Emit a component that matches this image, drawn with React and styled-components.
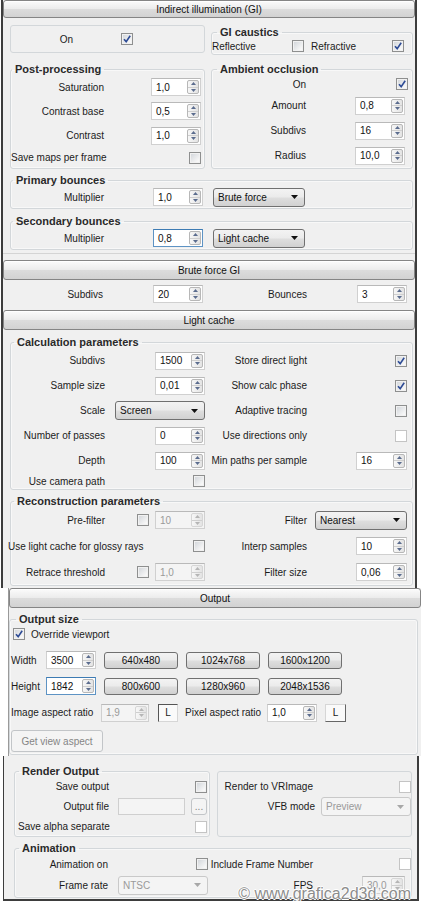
import styled, { createGlobalStyle } from 'styled-components';

const Global = createGlobalStyle`
  html, body { margin: 0; padding: 0; background: #fff; }
  body {
    font-family: "Liberation Sans", Arial, sans-serif;
    font-size: 10px;
    color: #1b1b1b;
  }
  * { box-sizing: border-box; }
`;

const TopPanel = styled.div`
  margin-left: 1px;
  width: 416px;
  height: 588px;
  background: #f0f0f0;
  border-left: 2px solid #3d3d3d;
  border-right: 2px solid #3d3d3d;
  overflow: hidden;
`;

const OutputTop = styled.div`
  margin-left: 8px;
  width: 413px;
  height: 168px;
  background: #f0f0f0;
  border-left: 1px solid #9a9a9a;
`;

const OutputBottom = styled.div`
  position: relative;
  margin-left: 3px;
  width: 416px;
  background: #f0f0f0;
  border-left: 1px solid #3d3d3d;
  border-right: 2px solid #3d3d3d;
  border-bottom: 2px solid #3d3d3d;
  padding: 9px 5px 1px 10px;
`;

const RollHeader = styled.div`
  height: ${p => p.$h || 20}px;
  margin-top: ${p => p.$mt || 0}px;
  border: 1px solid #858585;
  border-radius: 3px;
  background: linear-gradient(#fbfbfb, #ececec 48%, #dcdcdc 52%, #d2d2d2);
  box-shadow: inset 0 1px 0 #fff;
  display: flex;
  align-items: center;
  justify-content: center;
  font-size: 10px;
  color: #111;
`;

const Body = styled.div`
  padding: ${p => p.$pad};
  border-bottom: ${p => (p.$line ? '1px solid #d4d4d4' : 'none')};
`;

const Pair = styled.div`
  display: grid;
  grid-template-columns: ${p => p.$cols};
  column-gap: ${p => p.$gap}px;
  margin-top: ${p => p.$mt || 0}px;
  align-items: ${p => p.$align || 'stretch'};
`;

const Group = styled.fieldset`
  margin: ${p => p.$mt || 0}px ${p => p.$mr || 0}px 0 0;
  padding: ${p => p.$pad || '0'};
  min-width: 0;
  height: ${p => (p.$h ? `${p.$h}px` : 'auto')};
  border: 1px solid #d3d7da;
  border-radius: 3px;
  box-shadow: inset 0 0 0 1px #f8f8f8;
`;

const Legend = styled.legend`
  margin-left: ${p => p.$ml}px;
  padding: 0 3px;
  font-size: 11px;
  line-height: 12px;
  font-weight: bold;
  color: #2a2a2a;
`;

const PlainBox = styled.div`
  height: ${p => p.$h}px;
  margin-top: ${p => p.$mt || 0}px;
  border: 1px solid #d3d7da;
  border-radius: 3px;
  padding: ${p => p.$pad || '0'};
`;

const Row = styled.div`
  display: grid;
  grid-template-columns: ${p => p.$cols};
  align-items: center;
  height: ${p => p.$h}px;
  padding-right: ${p => p.$pr || 0}px;
`;

const Line = styled.div`
  display: flex;
  align-items: center;
  height: ${p => p.$h}px;
  margin-top: ${p => p.$mt || 0}px;
  padding: ${p => p.$pad || '0'};
`;

const Label = styled.span`
  text-align: ${p => (p.$left ? 'left' : 'right')};
  white-space: nowrap;
  margin-left: ${p => p.$ml || 0}px;
  width: ${p => (p.$w ? `${p.$w}px` : 'auto')};
  flex: none;
`;

const Cell = styled.div`
  display: flex;
  justify-content: flex-end;
  align-items: center;
  gap: ${p => p.$gap || 0}px;
  margin-right: ${p => p.$mr || 0}px;
`;

const Spacer = styled.div`
  flex: 1;
`;

const CheckBox = styled.span`
  flex: none;
  width: 12px;
  height: 12px;
  margin-left: ${p => p.$ml || 0}px;
  display: inline-flex;
  align-items: center;
  justify-content: center;
  border: 1px solid ${p => (p.$flat ? '#c4c4c4' : '#8e8f8f')};
  background: ${p => (p.$flat ? '#fff' : 'linear-gradient(135deg, #cfd3d8, #f7f7f7 80%)')};
  box-shadow: inset 0 0 0 1px ${p => (p.$flat ? '#fff' : '#f1f1f1')};
`;

const Check = ({ on, flat, ml }) => (
  <CheckBox $flat={flat} $ml={ml}>
    {on && (
      <svg width="10" height="10" viewBox="0 0 10 10">
        <path d="M2 5.2 L4.2 7.6 L8.2 1.8" fill="none" stroke="#2d4b95" strokeWidth="1.6" />
      </svg>
    )}
  </CheckBox>
);

const SpinFrame = styled.div`
  flex: none;
  width: ${p => p.$w || 50}px;
  height: 18px;
  display: flex;
  background: ${p => (p.$disabled ? '#f4f4f4' : '#fff')};
  border: 1px solid ${p => (p.$focus ? '#5d93c4' : '#d0d0d0')};
  border-top-color: ${p => (p.$focus ? '#3d7bb3' : '#b9b9b9')};
  color: ${p => (p.$disabled ? '#9a9a9a' : '#111')};
`;

const SpinValue = styled.span`
  flex: 1;
  display: flex;
  align-items: center;
  padding-left: 4px;
`;

const SpinArrows = styled.div`
  width: 12px;
  margin: 1px;
  display: flex;
  flex-direction: column;
  border: 1px solid ${p => (p.$disabled ? '#d6d6d6' : '#b7b7b7')};
  border-radius: 2px;
  background: linear-gradient(90deg, #f7f7f7, #e3e3e3);
`;

const SpinHalf = styled.div`
  flex: 1;
  display: flex;
  align-items: center;
  justify-content: center;
  & + & { border-top: 1px solid #cfcfcf; }
`;

const Spin = ({ v, w, focus, disabled }) => {
  const c = disabled ? '#b5b5b5' : '#5b6c8e';
  return (
    <SpinFrame $w={w} $focus={focus} $disabled={disabled}>
      <SpinValue>{v}</SpinValue>
      <SpinArrows $disabled={disabled}>
        <SpinHalf>
          <svg width="5" height="3" viewBox="0 0 5 3"><path d="M0 3 L2.5 0 L5 3Z" fill={c} /></svg>
        </SpinHalf>
        <SpinHalf>
          <svg width="5" height="3" viewBox="0 0 5 3"><path d="M0 0 L2.5 3 L5 0Z" fill={c} /></svg>
        </SpinHalf>
      </SpinArrows>
    </SpinFrame>
  );
};

const SelectBox = styled.div`
  flex: none;
  width: ${p => p.$w}px;
  height: 19px;
  display: flex;
  align-items: center;
  justify-content: space-between;
  padding: 0 6px 0 4px;
  border: 1px solid ${p => (p.$disabled ? '#c9c9c9' : '#707070')};
  border-radius: 3px;
  background: ${p =>
    p.$disabled ? '#f4f4f4' : 'linear-gradient(#f3f3f3, #ebebeb 48%, #dedede 52%, #d1d1d1)'};
  color: ${p => (p.$disabled ? '#9a9a9a' : '#111')};
`;

const Select = ({ v, w, disabled }) => (
  <SelectBox $w={w} $disabled={disabled}>
    <span>{v}</span>
    <svg width="7" height="4" viewBox="0 0 7 4">
      <path d="M0 0 L7 0 L3.5 4Z" fill={disabled ? '#a8a8a8' : '#111'} />
    </svg>
  </SelectBox>
);

const Button = styled.div`
  flex: none;
  width: ${p => p.$w}px;
  height: ${p => p.$h || 17}px;
  margin-left: ${p => p.$ml || 0}px;
  display: flex;
  align-items: center;
  justify-content: center;
  border: 1px solid ${p => (p.$disabled ? '#c2c5c8' : '#707070')};
  border-radius: 3px;
  background: ${p =>
    p.$disabled ? '#f4f4f4' : 'linear-gradient(#f3f3f3, #ebebeb 48%, #dedede 52%, #d1d1d1)'};
  color: ${p => (p.$disabled ? '#858585' : '#111')};
`;

const Toggle = styled.div`
  flex: none;
  width: ${p => p.$w}px;
  height: 18px;
  margin-left: ${p => p.$ml}px;
  display: flex;
  align-items: center;
  justify-content: center;
  background: #fafafa;
  border: 1px solid #d6d6d6;
  border-left-color: ${p => (p.$pressed ? '#555' : '#d6d6d6')};
  border-top-color: ${p => (p.$pressed ? '#555' : '#d6d6d6')};
  border-right-color: ${p => (p.$pressed ? '#d6d6d6' : '#666')};
  border-bottom-color: ${p => (p.$pressed ? '#d6d6d6' : '#666')};
`;

const FileField = styled.div`
  width: 67px;
  height: 17px;
  border: 1px solid #cfcfcf;
  background: #f4f4f4;
`;

const Watermark = styled.div`
  position: absolute;
  right: 6px;
  bottom: -4px;
  font-family: "Liberation Sans", Arial, sans-serif;
  font-size: 16px;
  color: #8d8d8d;
  text-shadow: 1px 0 0 #fff, -1px 0 0 #fff, 0 1px 0 #fff, 0 -1px 0 #fff;
  white-space: nowrap;
`;

const LEFT3 = '93px 1fr 50px';
const CALC = '94px 100px 102px 1fr';
const BOUNCE = '93px 49px 50px 10px 92px';
const ANIM = '93px 100px 105px 1fr';

export default function App() {
  return (
    <>
      <Global />
      <TopPanel>
        <RollHeader $h={18}>Indirect illumination (GI)</RollHeader>
        <Body $pad="7px 2px 3px 7px" $line>
          <Pair $cols="195px 202px" $gap={6} $align="start">
            <PlainBox $h={28}>
              <Row $cols="62px 60px" $h={26}>
                <Label>On</Label>
                <Cell><Check on /></Cell>
              </Row>
            </PlainBox>
            <Group $mt={1} $h={29}>
              <Legend $ml={5}>GI caustics</Legend>
              <Line $h={16}>
                <Label $left $w={80}>Reflective</Label>
                <Check />
                <Label $left $ml={7}>Refractive</Label>
                <Spacer />
                <Check on />
                <Label $w={8} />
              </Line>
            </Group>
          </Pair>

          <Pair $cols="195px 202px" $gap={6} $mt={8}>
            <Group>
              <Legend $ml={1}>Post-processing</Legend>
              <Row $cols={LEFT3} $h={24} $pr={3}>
                <Label>Saturation</Label><span /><Spin v="1,0" />
              </Row>
              <Row $cols={LEFT3} $h={24} $pr={3}>
                <Label>Contrast base</Label><span /><Spin v="0,5" />
              </Row>
              <Row $cols={LEFT3} $h={25} $pr={3}>
                <Label>Contrast</Label><span /><Spin v="1,0" />
              </Row>
              <Row $cols={LEFT3} $h={19} $pr={3}>
                <Label $left>Save maps per frame</Label><span /><Cell><Check /></Cell>
              </Row>
            </Group>
            <Group>
              <Legend $ml={5}>Ambient occlusion</Legend>
              <Row $cols="94px 1fr 50px" $h={18} $pr={7}>
                <Label>On</Label><span /><Cell $mr={-3}><Check on /></Cell>
              </Row>
              <Row $cols="94px 1fr 50px" $h={25} $pr={7}>
                <Label>Amount</Label><span /><Spin v="0,8" />
              </Row>
              <Row $cols="94px 1fr 50px" $h={25} $pr={7}>
                <Label>Subdivs</Label><span /><Spin v="16" />
              </Row>
              <Row $cols="94px 1fr 50px" $h={25} $pr={7}>
                <Label>Radius</Label><span /><Spin v="10,0" />
              </Row>
            </Group>
          </Pair>

          <Group $mt={5}>
            <Legend $ml={2}>Primary bounces</Legend>
            <Row $cols={BOUNCE} $h={22}>
              <Label>Multiplier</Label><span /><Spin v="1,0" /><span /><Select w={92} v="Brute force" />
            </Row>
          </Group>
          <Group $mt={6}>
            <Legend $ml={2}>Secondary bounces</Legend>
            <Row $cols={BOUNCE} $h={22}>
              <Label>Multiplier</Label><span /><Spin v="0,8" focus /><span /><Select w={92} v="Light cache" />
            </Row>
          </Group>
        </Body>

        <RollHeader $mt={6}>Brute force GI</RollHeader>
        <Body $pad="3px 0 0 7px">
          <Row $cols="93px 50px 50px 104px 50px 50px" $h={22}>
            <Label>Subdivs</Label><span /><Spin v="20" />
            <Label>Bounces</Label><span /><Spin v="3" />
          </Row>
        </Body>

        <RollHeader $mt={5}>Light cache</RollHeader>
        <Body $pad="6px 2px 0 7px">
          <Group>
            <Legend $ml={3}>Calculation parameters</Legend>
            <Row $cols={CALC} $h={25} $pr={5}>
              <Label>Subdivs</Label><Cell><Spin v="1500" /></Cell>
              <Label>Store direct light</Label><Cell><Check on /></Cell>
            </Row>
            <Row $cols={CALC} $h={25} $pr={5}>
              <Label>Sample size</Label><Cell><Spin v="0,01" /></Cell>
              <Label>Show calc phase</Label><Cell><Check on /></Cell>
            </Row>
            <Row $cols={CALC} $h={25} $pr={5}>
              <Label>Scale</Label><Cell><Select w={90} v="Screen" /></Cell>
              <Label>Adaptive tracing</Label><Cell><Check /></Cell>
            </Row>
            <Row $cols={CALC} $h={25} $pr={5}>
              <Label>Number of passes</Label><Cell><Spin v="0" /></Cell>
              <Label>Use directions only</Label><Cell><Check flat /></Cell>
            </Row>
            <Row $cols={CALC} $h={25} $pr={5}>
              <Label>Depth</Label><Cell><Spin v="100" /></Cell>
              <Label>Min paths per sample</Label><Cell><Spin v="16" w={51} /></Cell>
            </Row>
            <Row $cols={CALC} $h={16} $pr={5}>
              <Label>Use camera path</Label><Cell><Check /></Cell>
            </Row>
          </Group>
          <Group $mt={5}>
            <Legend $ml={3}>Reconstruction parameters</Legend>
            <Row $cols={CALC} $h={26} $pr={5}>
              <Label>Pre-filter</Label>
              <Cell $gap={6}><Check /><Spin v="10" disabled /></Cell>
              <Label>Filter</Label>
              <Cell><Select w={92} v="Nearest" /></Cell>
            </Row>
            <Row $cols={CALC} $h={26} $pr={5}>
              <Label $left $ml={-3}>Use light cache for glossy rays</Label>
              <Cell><Check /></Cell>
              <Label>Interp samples</Label>
              <Cell><Spin v="10" w={51} /></Cell>
            </Row>
            <Row $cols={CALC} $h={26} $pr={5}>
              <Label>Retrace threshold</Label>
              <Cell $gap={6}><Check /><Spin v="1,0" disabled /></Cell>
              <Label>Filter size</Label>
              <Cell><Spin v="0,06" w={51} /></Cell>
            </Row>
          </Group>
        </Body>
      </TopPanel>

      <OutputTop>
        <RollHeader>Output</RollHeader>
        <Group $mt={5} $mr={3} $pad="0 0 2px 0">
          <Legend $ml={6}>Output size</Legend>
          <Line $h={18}>
            <Check on ml={3} />
            <Label $left $ml={6}>Override viewport</Label>
          </Line>
          <Line $h={26} $mt={4} $pad="0 0 0 1px">
            <Label $left $w={35}>Width</Label>
            <Spin v="3500" />
            <Button $w={74} $ml={8}>640x480</Button>
            <Button $w={74} $ml={8}>1024x768</Button>
            <Button $w={74} $ml={8}>1600x1200</Button>
          </Line>
          <Line $h={26} $pad="0 0 0 1px">
            <Label $left $w={35}>Height</Label>
            <Spin v="1842" focus />
            <Button $w={74} $ml={8}>800x600</Button>
            <Button $w={74} $ml={8}>1280x960</Button>
            <Button $w={74} $ml={8}>2048x1536</Button>
          </Line>
          <Line $h={27} $pad="0 0 0 1px">
            <Label $left $w={90}>Image aspect ratio</Label>
            <Spin v="1,9" w={48} disabled />
            <Toggle $w={20} $ml={9} $pressed>L</Toggle>
            <Label $left $w={82} $ml={7}>Pixel aspect ratio</Label>
            <Spin v="1,0" />
            <Toggle $w={21} $ml={8}>L</Toggle>
          </Line>
          <Line $h={22} $mt={4} $pad="0 0 0 1px">
            <Button $w={92} $h={22} $disabled>Get view aspect</Button>
          </Line>
        </Group>
      </OutputTop>

      <OutputBottom>
        <Pair $cols="196px 195px" $gap={7}>
          <Group>
            <Legend $ml={4}>Render Output</Legend>
            <Row $cols="94px 1fr" $h={19} $pr={2}>
              <Label>Save output</Label><Cell><Check /></Cell>
            </Row>
            <Row $cols="94px 1fr" $h={21} $pr={2}>
              <Label>Output file</Label>
              <Cell $gap={6}>
                <FileField />
                <Button $w={16} $h={17} $disabled>...</Button>
              </Cell>
            </Row>
            <Row $cols="94px 1fr" $h={19} $pr={2}>
              <Label $left $ml={3}>Save alpha separate</Label><Cell><Check flat /></Cell>
            </Row>
          </Group>
          <PlainBox $mt={6} $pad="5px 0 0 0">
            <Row $cols="95px 1fr" $h={19}>
              <Label>Render to VRImage</Label><Cell><Check flat /></Cell>
            </Row>
            <Row $cols="97px 1fr" $h={21}>
              <Label>VFB mode</Label><Cell><Select w={90} v="Preview" disabled /></Cell>
            </Row>
          </PlainBox>
        </Pair>
        <Group $mt={5} $pad="1px 0 0 0">
          <Legend $ml={4}>Animation</Legend>
          <Row $cols={ANIM} $h={18}>
            <Label>Animation on</Label><Cell><Check /></Cell>
            <Label>Include Frame Number</Label><Cell><Check flat /></Cell>
          </Row>
          <Row $cols={ANIM} $h={24}>
            <Label>Frame rate</Label><Cell><Select w={90} v="NTSC" disabled /></Cell>
            <Label>FPS</Label><Cell $mr={6}><Spin v="30,0" w={43} disabled /></Cell>
          </Row>
        </Group>
        <Watermark>© www.grafica2d3d.com</Watermark>
      </OutputBottom>
    </>
  );
}
